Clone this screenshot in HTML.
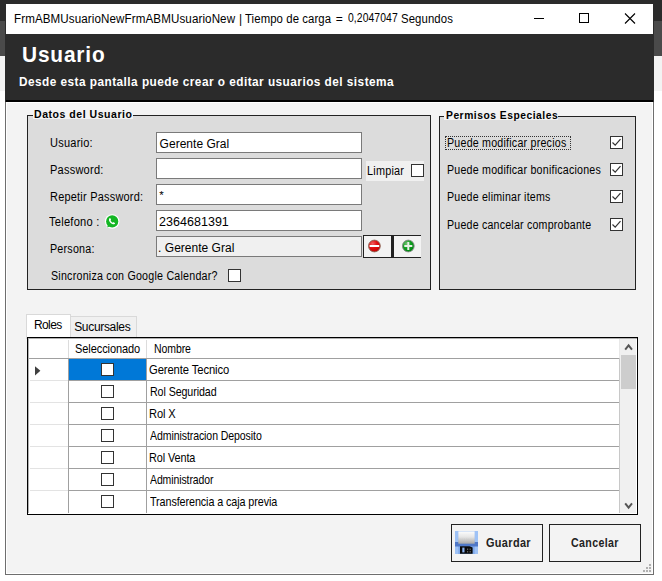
<!DOCTYPE html>
<html><head><meta charset="utf-8">
<style>
*{margin:0;padding:0;box-sizing:border-box}
html,body{width:662px;height:581px;overflow:hidden;background:#fff;font-family:"Liberation Sans",sans-serif;font-size:12px;color:#000}
.a{position:absolute}
.t{position:absolute;white-space:nowrap;line-height:1}
.cb{position:absolute;width:13px;height:13px;border:1px solid #333;background:#fff}
</style></head><body>
<div class="a" style="left:0px;top:0px;width:662px;height:21px;background:#2b2b2b"></div>
<div class="a" style="left:0px;top:21px;width:662px;height:35px;background:#4a4a4a"></div>
<div class="a" style="left:0px;top:56px;width:662px;height:35px;background:#f3f3f3"></div>
<div class="a" style="left:5px;top:3px;width:649px;height:572px;background:#2b2b2b"></div>
<div class="a" style="left:5px;top:102px;width:649px;height:473px;background:#6e6e6e"></div>
<div class="a" style="left:6px;top:4px;width:647px;height:30px;background:#fff"></div>
<div class="a" style="left:6px;top:34px;width:647px;height:66px;background:#2b2b2b"></div>
<div class="a" style="left:6px;top:100px;width:647px;height:2px;background:#000"></div>
<div class="a" style="left:6px;top:102px;width:647px;height:472px;background:#fff"></div>
<div class="a" style="left:7px;top:103px;width:645px;height:470px;background:#f3f3f3"></div>
<div class="a" style="left:534px;top:18px;width:10px;height:1px;background:#000"></div>
<div class="a" style="left:579px;top:13px;width:10px;height:10px;border:1px solid #000"></div>
<svg class="a" style="left:624px;top:13px" width="12" height="11" viewBox="0 0 12 11"><path d="M1 0.5L11 10.5M11 0.5L1 10.5" stroke="#000" stroke-width="1.1"/></svg>
<div class="a" style="left:27px;top:115px;width:404px;height:175px;border:1px solid #222;border-top:none;background:#dcdcdc"></div>
<div class="a" style="left:27px;top:115px;width:6px;height:1px;background:#222"></div>
<div class="a" style="left:133px;top:115px;width:298px;height:1px;background:#222"></div>
<div class="a" style="left:33px;top:106px;width:100px;height:13px;background:#f3f3f3"></div>
<div class="a" style="left:439px;top:116px;width:197px;height:174px;border:1px solid #222;border-top:none;background:#dcdcdc"></div>
<div class="a" style="left:439px;top:116px;width:5px;height:1px;background:#222"></div>
<div class="a" style="left:558px;top:116px;width:78px;height:1px;background:#222"></div>
<div class="a" style="left:444px;top:107px;width:114px;height:13px;background:#f3f3f3"></div>
<div class="a" style="left:156px;top:132px;width:206px;height:21px;border:1px solid #7a7a7a;background:#fff"></div>
<div class="a" style="left:156px;top:158px;width:206px;height:21px;border:1px solid #7a7a7a;background:#fff"></div>
<div class="a" style="left:156px;top:184px;width:206px;height:21px;border:1px solid #7a7a7a;background:#fff"></div>
<div class="a" style="left:156px;top:210px;width:206px;height:21px;border:1px solid #7a7a7a;background:#fff"></div>
<div class="a" style="left:156px;top:236px;width:206px;height:21px;border:1px solid #7a7a7a;background:#f0f0f0"></div>
<div class="a" style="left:366px;top:161px;width:58px;height:20px;background:#f0f0f0"></div>
<div class="cb" style="left:411px;top:164px"></div>
<svg class="a" style="left:104px;top:213px" width="17" height="17" viewBox="0 0 17 17"><circle cx="8.2" cy="8.5" r="7.3" fill="#fff"/><path d="M2.6 15.2 L3.6 10.8 L6.8 13.6 Z" fill="#fff"/><circle cx="8.2" cy="8.4" r="6.1" fill="#14b624"/><path d="M3.2 14.4 L4.2 10.9 L6.6 13.1 Z" fill="#14b624"/><path d="M5.4 5.4c.3-.4.7-.4.9-.1l.7 1.3c.1.3 0 .5-.2.7l-.3.3c.4.9 1.2 1.7 2.1 2.1l.3-.3c.2-.2.5-.3.7-.2l1.3.7c.3.2.3.6-.1.9-.6.6-1.5.7-2.4.3-1.5-.7-2.7-1.9-3.3-3.4-.3-.8-.2-1.7.3-2.3z" fill="#fff"/></svg>
<div class="a" style="left:363px;top:235px;width:30px;height:23px;border:1px solid #222;border-right:2px solid #222;background:#f3f3f3"></div>
<div class="a" style="left:393px;top:235px;width:28px;height:23px;border:1px solid #222;border-right:none;background:#f3f3f3"></div>
<svg class="a" style="left:367px;top:239px" width="15" height="15" viewBox="0 0 15 15"><defs><radialGradient id="rg" cx="0.35" cy="0.3" r="0.8"><stop offset="0" stop-color="#f06060"/><stop offset="0.45" stop-color="#e01010"/><stop offset="1" stop-color="#c00000"/></radialGradient></defs><circle cx="7.4" cy="7" r="5.9" fill="url(#rg)" stroke="#8a6a5a" stroke-width="0.9"/><rect x="2.6" y="6" width="9.6" height="2" fill="#fff"/></svg>
<svg class="a" style="left:401px;top:239px" width="15" height="15" viewBox="0 0 15 15"><defs><radialGradient id="gg" cx="0.35" cy="0.3" r="0.8"><stop offset="0" stop-color="#70c070"/><stop offset="0.45" stop-color="#10a020"/><stop offset="1" stop-color="#008010"/></radialGradient></defs><circle cx="7.3" cy="7" r="5.9" fill="url(#gg)" stroke="#8a8a8a" stroke-width="0.9"/><rect x="3.3" y="6" width="8" height="2" fill="#e8f0e8"/><rect x="6.3" y="3" width="2" height="8" fill="#e8f0e8"/></svg>
<div class="cb" style="left:228px;top:269px"></div>
<div class="cb" style="left:610px;top:136px"><svg width="11" height="11" viewBox="0 0 11 11" style="position:absolute;left:0;top:0"><path d="M1.5 5.5L4.2 8.2L9.5 2.2" fill="none" stroke="#333" stroke-width="1.2"/></svg></div>
<div class="cb" style="left:610px;top:163px"><svg width="11" height="11" viewBox="0 0 11 11" style="position:absolute;left:0;top:0"><path d="M1.5 5.5L4.2 8.2L9.5 2.2" fill="none" stroke="#333" stroke-width="1.2"/></svg></div>
<div class="cb" style="left:610px;top:190px"><svg width="11" height="11" viewBox="0 0 11 11" style="position:absolute;left:0;top:0"><path d="M1.5 5.5L4.2 8.2L9.5 2.2" fill="none" stroke="#333" stroke-width="1.2"/></svg></div>
<div class="cb" style="left:610px;top:218px"><svg width="11" height="11" viewBox="0 0 11 11" style="position:absolute;left:0;top:0"><path d="M1.5 5.5L4.2 8.2L9.5 2.2" fill="none" stroke="#333" stroke-width="1.2"/></svg></div>
<div class="a" style="left:445px;top:136px;width:126px;height:14px;border:1px dotted #333"></div>
<div class="a" style="left:26px;top:314px;width:45px;height:25px;border:1px solid #d9d9d9;border-bottom:none;background:#fff"></div>
<div class="a" style="left:70px;top:316px;width:67px;height:22px;border:1px solid #d9d9d9;border-bottom:none;background:#f0f0f0"></div>
<div class="a" style="left:27px;top:337px;width:611px;height:178px;border:1px solid #000;background:#fff"></div>
<div class="a" style="left:28px;top:338px;width:609px;height:1px;background:#b0b0b0"></div>
<div class="a" style="left:28px;top:338px;width:1px;height:175px;background:#b0b0b0"></div>
<div class="a" style="left:29px;top:358px;width:591px;height:1px;background:#a0a0a0"></div>
<div class="a" style="left:68px;top:340px;width:1px;height:18px;background:#dcdcdc"></div>
<div class="a" style="left:146px;top:340px;width:1px;height:18px;background:#dcdcdc"></div>
<div class="a" style="left:68px;top:358px;width:1px;height:155px;background:#a0a0a0"></div>
<div class="a" style="left:146px;top:358px;width:1px;height:155px;background:#a0a0a0"></div>
<div class="a" style="left:30px;top:380px;width:38px;height:1px;background:#e3e3e3"></div>
<div class="a" style="left:69px;top:380px;width:551px;height:1px;background:#a0a0a0"></div>
<div class="a" style="left:30px;top:402px;width:38px;height:1px;background:#e3e3e3"></div>
<div class="a" style="left:69px;top:402px;width:551px;height:1px;background:#a0a0a0"></div>
<div class="a" style="left:30px;top:424px;width:38px;height:1px;background:#e3e3e3"></div>
<div class="a" style="left:69px;top:424px;width:551px;height:1px;background:#a0a0a0"></div>
<div class="a" style="left:30px;top:446px;width:38px;height:1px;background:#e3e3e3"></div>
<div class="a" style="left:69px;top:446px;width:551px;height:1px;background:#a0a0a0"></div>
<div class="a" style="left:30px;top:468px;width:38px;height:1px;background:#e3e3e3"></div>
<div class="a" style="left:69px;top:468px;width:551px;height:1px;background:#a0a0a0"></div>
<div class="a" style="left:30px;top:490px;width:38px;height:1px;background:#e3e3e3"></div>
<div class="a" style="left:69px;top:490px;width:551px;height:1px;background:#a0a0a0"></div>
<div class="a" style="left:69px;top:359px;width:77px;height:21px;background:#0078d7"></div>
<svg class="a" style="left:35px;top:365.5px" width="6" height="10" viewBox="0 0 6 10"><path d="M0 0.3L5.4 4.8L0 9.4Z" fill="#404040"/></svg>
<div class="cb" style="left:101px;top:363px"></div>
<div class="cb" style="left:101px;top:385px"></div>
<div class="cb" style="left:101px;top:407px"></div>
<div class="cb" style="left:101px;top:429px"></div>
<div class="cb" style="left:101px;top:451px"></div>
<div class="cb" style="left:101px;top:473px"></div>
<div class="cb" style="left:101px;top:495px"></div>
<div class="a" style="left:619px;top:339px;width:1px;height:19px;background:#e8e8e8"></div>
<div class="a" style="left:619px;top:358px;width:1px;height:155px;background:#c8c8c8"></div>
<div class="a" style="left:620px;top:339px;width:17px;height:174px;background:#f0f0f0"></div>
<div class="a" style="left:636px;top:339px;width:1px;height:175px;background:#fff"></div>
<div class="a" style="left:28px;top:513px;width:609px;height:1px;background:#fff"></div>
<div class="a" style="left:621px;top:355px;width:15px;height:34px;background:#cdcdcd"></div>
<svg class="a" style="left:624px;top:343px" width="10" height="8" viewBox="0 0 10 8"><path d="M1.2 6.6L4.6 2.4L8 6.6" fill="none" stroke="#555" stroke-width="2"/></svg>
<svg class="a" style="left:624px;top:502px" width="10" height="8" viewBox="0 0 10 8"><path d="M1.2 1.4L4.6 5.6L8 1.4" fill="none" stroke="#555" stroke-width="2"/></svg>
<div class="a" style="left:451px;top:524px;width:92px;height:38px;border:1px solid #222;background:#f3f3f3"></div>
<div class="a" style="left:549px;top:524px;width:92px;height:38px;border:1px solid #222;background:#f3f3f3"></div>
<svg class="a" style="left:454.5px;top:531.3px" width="23" height="23" viewBox="0 0 23 23">
<defs><linearGradient id="lbl" x1="0" y1="0" x2="0" y2="1"><stop offset="0" stop-color="#fdfdfd"/><stop offset="0.45" stop-color="#e6e6e6"/><stop offset="1" stop-color="#a9a9a9"/></linearGradient></defs>
<rect x="0" y="0" width="23" height="23" rx="1.2" fill="#80aaeb"/>
<rect x="0" y="0" width="3.3" height="23" fill="#9ec2f6"/>
<rect x="19.7" y="0" width="3.3" height="23" fill="#9ec2f6"/>
<rect x="0" y="11" width="23" height="4.5" fill="#4f78c8"/>
<rect x="3.3" y="0.3" width="16.4" height="12.4" fill="url(#lbl)"/>
<path d="M4.5 8.2H18.5" stroke="#c8c8c8" stroke-width="0.6" stroke-dasharray="1 1.2"/>
<path d="M5 15.3H14.5L17.6 16.5V22.7H5Z" fill="#080808"/>
<rect x="7.3" y="16.6" width="2.2" height="4.8" fill="#88b0f0"/>
<rect x="12" y="17.6" width="1.2" height="1.2" fill="#777"/><rect x="14.6" y="17.6" width="1.2" height="1.2" fill="#777"/>
<rect x="12" y="20.2" width="1.2" height="1.2" fill="#777"/><rect x="14.6" y="20.2" width="1.2" height="1.2" fill="#777"/>
</svg>
<div class="a" style="left:649px;top:564px;width:2px;height:2px;background:#b0b0b0"></div>
<div class="a" style="left:646px;top:567px;width:2px;height:2px;background:#b0b0b0"></div>
<div class="a" style="left:649px;top:567px;width:2px;height:2px;background:#b0b0b0"></div>
<div class="a" style="left:643px;top:570px;width:2px;height:2px;background:#b0b0b0"></div>
<div class="a" style="left:646px;top:570px;width:2px;height:2px;background:#b0b0b0"></div>
<div class="a" style="left:649px;top:570px;width:2px;height:2px;background:#b0b0b0"></div>
<div class="t" style="left:13.50px;top:12.74px;font-size:12px;letter-spacing:0.100px;transform:scaleX(0.9676);transform-origin:0 0;color:#000;">FrmABMUsuarioNewFrmABMUsuarioNew</div>
<div class="t" style="left:239.00px;top:12.74px;font-size:12px;letter-spacing:0.000px;color:#000;">|</div>
<div class="t" style="left:245.40px;top:12.74px;font-size:12px;letter-spacing:0.100px;transform:scaleX(0.9459);transform-origin:0 0;color:#000;">Tiempo de carga</div>
<div class="t" style="left:335.80px;top:12.74px;font-size:12px;letter-spacing:0.000px;color:#000;">=</div>
<div class="t" style="left:348.00px;top:12.15px;font-size:12.7px;letter-spacing:0.100px;transform:scaleX(0.8169);transform-origin:0 0;color:#000;">0,2047047</div>
<div class="t" style="left:400.60px;top:12.74px;font-size:12px;letter-spacing:0.100px;transform:scaleX(0.9464);transform-origin:0 0;color:#000;">Segundos</div>
<div class="t" style="left:22.30px;top:44.35px;font-size:22.5px;letter-spacing:0.900px;font-weight:bold;transform:scaleX(0.9272);transform-origin:0 0;color:#fff;">Usuario</div>
<div class="t" style="left:19.20px;top:75.92px;font-size:12.5px;letter-spacing:0.500px;font-weight:bold;transform:scaleX(0.9440);transform-origin:0 0;color:#fff;">Desde esta pantalla puede crear o editar usuarios del sistema</div>
<div class="t" style="left:34.40px;top:109.29px;font-size:11px;letter-spacing:0.550px;font-weight:bold;transform:scaleX(0.9574);transform-origin:0 0;color:#000;">Datos del Usuario</div>
<div class="t" style="left:50.00px;top:136.54px;font-size:12px;letter-spacing:0.250px;transform:scaleX(0.9181);transform-origin:0 0;color:#000;">Usuario:</div>
<div class="t" style="left:50.00px;top:164.44px;font-size:12px;letter-spacing:0.250px;transform:scaleX(0.9186);transform-origin:0 0;color:#000;">Password:</div>
<div class="t" style="left:50.00px;top:191.04px;font-size:12px;letter-spacing:0.250px;transform:scaleX(0.9121);transform-origin:0 0;color:#000;">Repetir Password:</div>
<div class="t" style="left:49.40px;top:216.24px;font-size:12px;letter-spacing:0.250px;transform:scaleX(0.9264);transform-origin:0 0;color:#000;">Telefono :</div>
<div class="t" style="left:50.40px;top:243.44px;font-size:12px;letter-spacing:0.250px;transform:scaleX(0.8921);transform-origin:0 0;color:#000;">Persona:</div>
<div class="t" style="left:51.40px;top:269.64px;font-size:12px;letter-spacing:0.250px;transform:scaleX(0.8906);transform-origin:0 0;color:#000;">Sincroniza con Google Calendar?</div>
<div class="t" style="left:159.60px;top:138.44px;font-size:12px;letter-spacing:0.019px;color:#000;">Gerente Gral</div>
<div class="t" style="left:159.20px;top:189.77px;font-size:11.5px;letter-spacing:0.000px;color:#000;">*</div>
<div class="t" style="left:159.10px;top:216.22px;font-size:12.5px;letter-spacing:0.023px;color:#000;">2364681391</div>
<div class="t" style="left:158.10px;top:241.64px;font-size:12px;letter-spacing:0.016px;color:#000;">. Gerente Gral</div>
<div class="t" style="left:367.00px;top:165.34px;font-size:12px;letter-spacing:0.250px;transform:scaleX(0.9052);transform-origin:0 0;color:#000;">Limpiar</div>
<div class="t" style="left:445.70px;top:109.59px;font-size:11px;letter-spacing:0.550px;font-weight:bold;transform:scaleX(0.9357);transform-origin:0 0;color:#000;">Permisos Especiales</div>
<div class="t" style="left:447.20px;top:137.44px;font-size:12px;letter-spacing:0.250px;transform:scaleX(0.8881);transform-origin:0 0;color:#000;">Puede modificar precios</div>
<div class="t" style="left:447.20px;top:163.64px;font-size:12px;letter-spacing:0.250px;transform:scaleX(0.8873);transform-origin:0 0;color:#000;">Puede modificar bonificaciones</div>
<div class="t" style="left:447.20px;top:190.54px;font-size:12px;letter-spacing:0.250px;transform:scaleX(0.8846);transform-origin:0 0;color:#000;">Puede eliminar items</div>
<div class="t" style="left:447.20px;top:218.84px;font-size:12px;letter-spacing:0.250px;transform:scaleX(0.8838);transform-origin:0 0;color:#000;">Puede cancelar comprobante</div>
<div class="t" style="left:34.00px;top:318.54px;font-size:12px;letter-spacing:-0.625px;color:#000;">Roles</div>
<div class="t" style="left:74.20px;top:321.34px;font-size:12px;letter-spacing:-0.322px;color:#000;">Sucursales</div>
<div class="t" style="left:75.20px;top:343.27px;font-size:12.2px;letter-spacing:-0.100px;transform:scaleX(0.9048);transform-origin:0 0;color:#000;">Seleccionado</div>
<div class="t" style="left:153.50px;top:342.57px;font-size:12.2px;letter-spacing:-0.100px;transform:scaleX(0.8617);transform-origin:0 0;color:#000;">Nombre</div>
<div class="t" style="left:148.70px;top:363.87px;font-size:12.2px;letter-spacing:-0.100px;transform:scaleX(0.9208);transform-origin:0 0;color:#000;">Gerente Tecnico</div>
<div class="t" style="left:149.50px;top:386.37px;font-size:12.2px;letter-spacing:-0.100px;transform:scaleX(0.8761);transform-origin:0 0;color:#000;">Rol Seguridad</div>
<div class="t" style="left:149.30px;top:408.27px;font-size:12.2px;letter-spacing:-0.100px;transform:scaleX(0.9090);transform-origin:0 0;color:#000;">Rol X</div>
<div class="t" style="left:150.30px;top:429.57px;font-size:12.2px;letter-spacing:-0.100px;transform:scaleX(0.8648);transform-origin:0 0;color:#000;">Administracion Deposito</div>
<div class="t" style="left:149.30px;top:452.47px;font-size:12.2px;letter-spacing:-0.100px;transform:scaleX(0.8906);transform-origin:0 0;color:#000;">Rol Venta</div>
<div class="t" style="left:150.30px;top:474.47px;font-size:12.2px;letter-spacing:-0.100px;transform:scaleX(0.8575);transform-origin:0 0;color:#000;">Administrador</div>
<div class="t" style="left:150.30px;top:496.27px;font-size:12.2px;letter-spacing:-0.100px;transform:scaleX(0.8842);transform-origin:0 0;color:#000;">Transferencia a caja previa</div>
<div class="t" style="left:486.40px;top:536.94px;font-size:12px;letter-spacing:0.400px;font-weight:bold;transform:scaleX(0.9082);transform-origin:0 0;color:#222;">Guardar</div>
<div class="t" style="left:571.20px;top:536.94px;font-size:12px;letter-spacing:0.400px;font-weight:bold;transform:scaleX(0.8852);transform-origin:0 0;color:#222;">Cancelar</div>
</body></html>
